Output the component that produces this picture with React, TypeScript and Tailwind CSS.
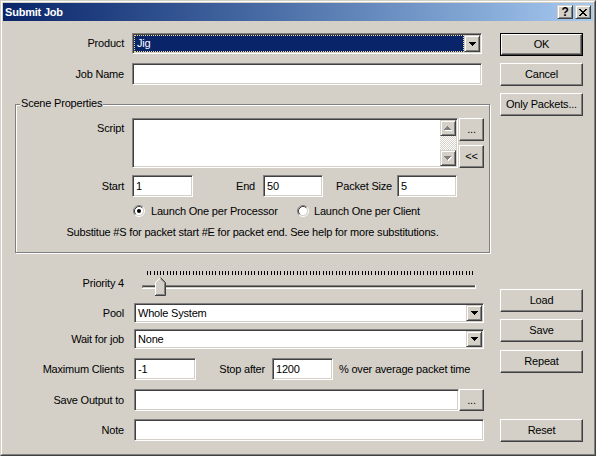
import React from "react";

// classic win32 bevels
const sunken =
  "border border-t-[#808080] border-l-[#808080] border-b-white border-r-white shadow-[inset_1px_1px_0_#404040,inset_-1px_-1px_0_#d4d0c8] bg-white";
const raised =
  "border border-t-white border-l-white border-b-[#404040] border-r-[#404040] shadow-[inset_-1px_-1px_0_#808080] bg-[#d4d0c8]";
const raisedSmall =
  "border border-t-[#d4d0c8] border-l-[#d4d0c8] border-b-[#404040] border-r-[#404040] shadow-[inset_1px_1px_0_#fff,inset_-1px_-1px_0_#808080] bg-[#d4d0c8]";

function Button({ label, isDefault = false, className = "" }: { label: string; isDefault?: boolean; className?: string }) {
  if (isDefault) {
    return (
      <div className={`border border-black ${className}`}>
        <div className={`${raised} flex h-full items-center justify-center`}>{label}</div>
      </div>
    );
  }
  return <div className={`${raised} flex items-center justify-center ${className}`}>{label}</div>;
}

function Edit({ value = "", className = "" }: { value?: string; className?: string }) {
  return <div className={`${sunken} flex items-center px-[3px] ${className}`}>{value}</div>;
}

function DownArrow({ disabled = false }: { disabled?: boolean }) {
  if (disabled) {
    return (
      <svg width="8" height="5" viewBox="0 0 8 5" shapeRendering="crispEdges">
        <path d="M1 1h7v1H1zM2 2h5v1H2zM3 3h3v1H3zM4 4h1v1H4z" fill="#fff" />
        <path d="M0 0h7v1H0zM1 1h5v1H1zM2 2h3v1H2zM3 3h1v1H3z" fill="#808080" />
      </svg>
    );
  }
  return (
    <svg width="7" height="4" viewBox="0 0 7 4" shapeRendering="crispEdges">
      <path d="M0 0h7v1H0zM1 1h5v1H1zM2 2h3v1H2zM3 3h1v1H3z" fill="#000" />
    </svg>
  );
}

function UpArrowDisabled() {
  return (
    <svg width="8" height="5" viewBox="0 0 8 5" shapeRendering="crispEdges">
      <path d="M4 1h1v1H4zM3 2h3v1H3zM2 3h5v1H2zM1 4h7v1H1z" fill="#fff" />
      <path d="M3 0h1v1H3zM2 1h3v1H2zM1 2h5v1H1zM0 3h7v1H0z" fill="#808080" />
    </svg>
  );
}

function Combo({ value, focused = false, className = "" }: { value: string; focused?: boolean; className?: string }) {
  return (
    <div className={`${sunken} flex p-[1px] ${className}`}>
      <div className="flex min-w-0 flex-1 items-center">
        {focused ? (
          <div className="flex h-full w-full items-center border border-dotted border-[#f5db95] bg-[#0a246a] pl-[2px] text-white">
            {value}
          </div>
        ) : (
          <span className="pl-[2px]">{value}</span>
        )}
      </div>
      <div className={`${raisedSmall} flex w-[16px] items-center justify-center`}>
        <DownArrow />
      </div>
    </div>
  );
}

function Radio({ checked = false }: { checked?: boolean }) {
  return (
    <svg width="12" height="12" viewBox="0 0 12 12" className="shrink-0">
      <circle cx="6" cy="6" r="4.5" fill="#fff" />
      <path d="M2.11 9.89A5.5 5.5 0 0 1 9.89 2.11" fill="none" stroke="#808080" />
      <path d="M9.89 2.11A5.5 5.5 0 0 1 2.11 9.89" fill="none" stroke="#fff" />
      <path d="M2.82 9.18A4.5 4.5 0 0 1 9.18 2.82" fill="none" stroke="#404040" />
      <path d="M9.18 2.82A4.5 4.5 0 0 1 2.82 9.18" fill="none" stroke="#d4d0c8" />
      {checked && <circle cx="6" cy="6" r="2" fill="#000" />}
    </svg>
  );
}

function Slider() {
  const ticks = Array.from({ length: 101 }, (_, i) => 5 + Math.round(i * 3.25));
  return (
    <svg width="334" height="30" viewBox="0 0 334 30" shapeRendering="crispEdges" className="ml-[18px]">
      {ticks.map((x) => (
        <rect key={x} x={x} y={3} width={1} height={4} fill="#000" />
      ))}
      <rect x="0" y="17" width="334" height="1" fill="#808080" />
      <rect x="0" y="17" width="1" height="4" fill="#808080" />
      <rect x="1" y="18" width="332" height="1" fill="#404040" />
      <rect x="1" y="19" width="332" height="1" fill="#d4d0c8" />
      <rect x="0" y="20" width="334" height="1" fill="#fff" />
      <rect x="333" y="17" width="1" height="4" fill="#fff" />
      <g transform="translate(13 9)">
        <polygon points="0,5 5,0 10,5 10,18 0,18" fill="#d4d0c8" />
        <polyline points="0.5,18 0.5,5.5 5.5,0.5" fill="none" stroke="#fff" shapeRendering="auto" />
        <polyline points="5.5,0.5 10.5,5.5 10.5,18.5 0,18.5" fill="none" stroke="#404040" shapeRendering="auto" />
        <polyline points="5.5,1.8 9.5,5.8 9.5,17.5 1,17.5" fill="none" stroke="#808080" shapeRendering="auto" />
      </g>
    </svg>
  );
}

function TitleBar() {
  return (
    <div className="flex h-[18px] items-center bg-linear-to-r from-[#0a246a] to-[#a6caf0]">
      <span className="pl-[2px] font-bold text-white">Submit Job</span>
      <div className="flex-1" />
      <div className={`${raisedSmall} flex h-[14px] w-[16px] items-center justify-center text-[12px] font-bold leading-none`}>?</div>
      <div className={`${raisedSmall} ml-[2px] mr-[2px] flex h-[14px] w-[16px] items-center justify-center`}>
        <svg width="8" height="7" viewBox="0 0 8 7" shapeRendering="crispEdges">
          <path d="M0 0h2v1H0zM6 0h2v1H6zM1 1h2v1H1zM5 1h2v1H5zM2 2h4v1H2zM3 3h2v1H3zM2 4h4v1H2zM1 5h2v1H1zM5 5h2v1H5zM0 6h2v1H0zM6 6h2v1H6z" fill="#000" />
        </svg>
      </div>
    </div>
  );
}

function SceneProperties() {
  return (
    <div className="relative ml-[12px] mt-[19px] flex h-[149px] w-[475px] flex-col border border-[#808080] shadow-[inset_1px_1px_0_#fff,1px_1px_0_#fff]">
      <span className="absolute left-[4px] top-[-8px] bg-[#d4d0c8] px-[1px]">Scene Properties</span>

      <div className="mt-[13px] flex h-[50px]">
        <div className="w-[108px] pt-[4px] text-right">Script</div>
        <div className={`${sunken} ml-[8px] flex h-full w-[326px] justify-end p-[1px]`}>
          <div className="flex h-full w-[16px] flex-col">
            <div className={`${raisedSmall} flex h-[16px] items-center justify-center`}>
              <UpArrowDisabled />
            </div>
            <div className="flex-1 bg-[image:repeating-conic-gradient(#d4d0c8_0_25%,#fff_0_50%)] bg-[length:2px_2px]" />
            <div className={`${raisedSmall} flex h-[16px] items-center justify-center`}>
              <DownArrow disabled />
            </div>
          </div>
        </div>
        <div className="flex flex-col gap-[4px]">
          <Button label="..." className="ml-[1px] h-[23px] w-[25px]" />
          <Button label="<<" className="ml-[1px] h-[23px] w-[25px]" />
        </div>
      </div>

      <div className="mt-[7px] flex h-[22px] items-center">
        <div className="w-[108px] text-right">Start</div>
        <Edit value="1" className="ml-[8px] h-full w-[61px]" />
        <div className="w-[62px] text-right">End</div>
        <Edit value="50" className="ml-[8px] h-full w-[60px]" />
        <div className="w-[69px] text-right">Packet Size</div>
        <Edit value="5" className="ml-[5px] h-full w-[60px]" />
      </div>

      <div className="mt-[8px] flex h-[12px] items-center">
        <div className="ml-[117px] flex w-[164px] items-center">
          <Radio checked />
          <span className="ml-[6px]">Launch One per Processor</span>
        </div>
        <Radio />
        <span className="ml-[5px]">Launch One per Client</span>
      </div>

      <div className="mt-[9px] text-center">
        Substitue #S for packet start #E for packet end. See help for more substitutions.
      </div>
    </div>
  );
}

export default function App() {
  return (
    <div className="h-[456px] w-[596px] select-none border border-b-[#404040] border-l-[#d4d0c8] border-r-[#404040] border-t-[#d4d0c8] bg-[#d4d0c8] font-['Liberation_Sans',Arial,sans-serif] text-[11px] leading-[13px] tracking-[-0.2px] text-black">
      <div className="flex h-full flex-col border border-b-[#808080] border-l-white border-r-[#808080] border-t-white p-[1px]">
        <TitleBar />
        <div className="flex">
          <div className="flex w-[489px] flex-col">
            <div className="mt-[12px] flex h-[21px] items-center">
              <div className="w-[121px] text-right">Product</div>
              <Combo value="Jig" focused className="ml-[8px] h-full w-[350px]" />
            </div>
            <div className="mt-[9px] flex h-[22px] items-center">
              <div className="w-[121px] text-right">Job Name</div>
              <Edit className="ml-[8px] h-full w-[350px]" />
            </div>

            <SceneProperties />

            <div className="mt-[15px] flex h-[30px] items-center">
              <div className="w-[121px] text-right">Priority 4</div>
              <Slider />
            </div>
            <div className="mt-[5px] flex h-[20px] items-center">
              <div className="w-[121px] text-right">Pool</div>
              <Combo value="Whole System" className="ml-[10px] h-full w-[350px]" />
            </div>
            <div className="mt-[6px] flex h-[20px] items-center">
              <div className="w-[121px] text-right">Wait for job</div>
              <Combo value="None" className="ml-[10px] h-full w-[350px]" />
            </div>
            <div className="mt-[9px] flex h-[22px] items-center">
              <div className="w-[121px] text-right">Maximum Clients</div>
              <Edit value="-1" className="ml-[10px] h-full w-[62px]" />
              <div className="w-[69px] text-right">Stop after</div>
              <Edit value="1200" className="ml-[7px] h-full w-[61px]" />
              <span className="ml-[6px]">% over average packet time</span>
            </div>
            <div className="mt-[9px] flex h-[22px] items-center">
              <div className="w-[121px] text-right">Save Output to</div>
              <Edit className="ml-[10px] h-full w-[325px]" />
              <Button label="..." className="h-full w-[25px]" />
            </div>
            <div className="mt-[8px] flex h-[22px] items-center">
              <div className="w-[121px] text-right">Note</div>
              <Edit className="ml-[10px] h-full w-[350px]" />
            </div>
          </div>

          <div className="ml-[8px] flex w-[83px] flex-col">
            <Button label="OK" isDefault className="mt-[12px] h-[23px]" />
            <Button label="Cancel" className="mt-[7px] h-[23px]" />
            <Button label="Only Packets..." className="mt-[7px] h-[23px]" />
            <Button label="Load" className="mt-[173px] h-[23px]" />
            <Button label="Save" className="mt-[7px] h-[23px]" />
            <Button label="Repeat" className="mt-[8px] h-[23px]" />
            <Button label="Reset" className="mt-[46px] h-[23px]" />
          </div>
        </div>
      </div>
    </div>
  );
}
